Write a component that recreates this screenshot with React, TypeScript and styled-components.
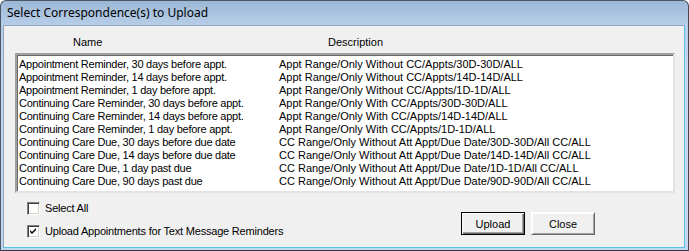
import styled, { createGlobalStyle } from "styled-components"

const rows = [
    { name: "Appointment Reminder, 30 days before appt.", desc: "Appt Range/Only Without CC/Appts/30D-30D/ALL" },
    { name: "Appointment Reminder, 14 days before appt.", desc: "Appt Range/Only Without CC/Appts/14D-14D/ALL" },
    { name: "Appointment Reminder, 1 day before appt.", desc: "Appt Range/Only Without CC/Appts/1D-1D/ALL" },
    { name: "Continuing Care Reminder, 30 days before appt.", desc: "Appt Range/Only With CC/Appts/30D-30D/ALL" },
    { name: "Continuing Care Reminder, 14 days before appt.", desc: "Appt Range/Only With CC/Appts/14D-14D/ALL" },
    { name: "Continuing Care Reminder, 1 day before appt.", desc: "Appt Range/Only With CC/Appts/1D-1D/ALL" },
    { name: "Continuing Care Due, 30 days before due date", desc: "CC Range/Only Without Att Appt/Due Date/30D-30D/All CC/ALL" },
    { name: "Continuing Care Due, 14 days before due date", desc: "CC Range/Only Without Att Appt/Due Date/14D-14D/All CC/ALL" },
    { name: "Continuing Care Due, 1 day past due", desc: "CC Range/Only Without Att Appt/Due Date/1D-1D/All CC/ALL" },
    { name: "Continuing Care Due, 90 days past due", desc: "CC Range/Only Without Att Appt/Due Date/90D-90D/All CC/ALL" },
]

const GlobalStyle = createGlobalStyle`
    html, body {
        margin: 0;
        padding: 0;
        background: #ffffff;
    }
    * {
        box-sizing: border-box;
    }
`

const Window = styled.div`
    width: 689px;
    height: 251px;
    display: flex;
    flex-direction: column;
    border: 1px solid #4b5766;
    border-radius: 6px 6px 0 0;
    background: linear-gradient(to bottom, #9db8d6 0px, #b4cce6 22px, #c3d7ee 60px, #c3d7ee 100%);
    border-right-color: #3b4b5b;
    border-bottom-color: #2f3d4a;
    overflow: hidden;
    font-family: "Liberation Sans", Arial, sans-serif;
    font-size: 11px;
    color: #000;
`

const TitleBar = styled.div`
    height: 24px;
    flex-shrink: 0;
    padding: 4px 0 0 6px;
    font-family: "Noto Sans", "Open Sans", sans-serif;
    font-size: 12px;
    line-height: 16px;
    color: #000;
`

const Client = styled.div`
    flex: 1;
    display: flex;
    flex-direction: column;
    margin: 0 3px 2px 2px;
    background: #f0f0f0;
    border: 1px solid #8fa4bd;
    border-right-color: #5bbfe8;
    border-bottom-color: #5bbfe8;
`

const Header = styled.div`
    display: flex;
    height: 27px;
    padding: 10px 0 0 0;
    line-height: 13px;
`

const HeaderCell = styled.span<{ width?: number; indent: number }>`
    width: ${props => props.width ? `${props.width}px` : 'auto'};
    padding-left: ${props => props.indent}px;
`

const ListBox = styled.div`
    margin: 0 9px 0 11px;
    height: 140px;
    background: #fff;
    border: 2px solid;
    border-color: #a0a0a0 #e3e3e3 #e3e3e3 #a0a0a0;
    box-shadow: inset 1px 1px 0 #696969;
    padding: 3px 0 0 2px;
    overflow: hidden;
`

const Row = styled.div`
    display: flex;
    height: 13px;
    line-height: 13px;
    white-space: nowrap;
`

const NameCell = styled.span`
    width: 260px;
    flex-shrink: 0;
    letter-spacing: -0.25px;
`

const DescCell = styled.span``

const Footer = styled.div`
    display: flex;
    padding: 9px 89px 0 23px;
`

const Checks = styled.div`
    display: flex;
    flex-direction: column;
    gap: 10px;
`

const CheckRow = styled.label`
    display: flex;
    align-items: center;
    gap: 5px;
    height: 13px;
    line-height: 13px;
    letter-spacing: -0.2px;
`

const Box = styled.span`
    width: 13px;
    height: 13px;
    background: #fff;
    border: 1px solid;
    border-color: #808080 #ffffff #ffffff #808080;
    box-shadow: inset 1px 1px 0 #404040, inset -1px -1px 0 #d4d0c8;
    display: flex;
    align-items: center;
    justify-content: center;
`

const Buttons = styled.div`
    display: flex;
    gap: 6px;
    margin-left: auto;
    padding-top: 10px;
`

const Button = styled.button<{ isDefault?: boolean }>`
    width: 64px;
    height: 23px;
    padding: 0;
    font-family: "Liberation Sans", Arial, sans-serif;
    font-size: 11px;
    color: #000;
    background: #f0f0f0;
    border: 1px solid ${props => props.isDefault ? '#000' : '#f0f0f0'};
    box-shadow: ${props => props.isDefault
        ? 'inset 1px 1px 0 #ffffff, inset -1px -1px 0 #696969, inset -2px -2px 0 #a0a0a0'
        : 'inset 1px 1px 0 #ffffff, inset -1px -1px 0 #a0a0a0'};
    ${props => !props.isDefault && 'border-color: #fff #696969 #696969 #fff;'}
`

function CheckBox({ checked, label }: { checked?: boolean; label: string }) {
    return (
        <CheckRow>
            <Box>
                {checked && (
                    <svg width="7" height="7" viewBox="0 0 7 7">
                        <path d="M0 2 L2 4 L6 0 L6 2 L2 6 L0 4 Z" fill="#000" />
                    </svg>
                )}
            </Box>
            <span>{label}</span>
        </CheckRow>
    )
}

export default function App() {
    return (
        <>
            <GlobalStyle />
            <Window>
                <TitleBar>Select Correspondence(s) to Upload</TitleBar>
                <Client>
                    <Header>
                        <HeaderCell width={324} indent={69}>Name</HeaderCell>
                        <HeaderCell indent={0}>Description</HeaderCell>
                    </Header>
                    <ListBox>
                        {rows.map(row => (
                            <Row key={row.name}>
                                <NameCell>{row.name}</NameCell>
                                <DescCell>{row.desc}</DescCell>
                            </Row>
                        ))}
                    </ListBox>
                    <Footer>
                        <Checks>
                            <CheckBox label="Select All" />
                            <CheckBox checked label="Upload Appointments for Text Message Reminders" />
                        </Checks>
                        <Buttons>
                            <Button isDefault>Upload</Button>
                            <Button>Close</Button>
                        </Buttons>
                    </Footer>
                </Client>
            </Window>
        </>
    )
}
